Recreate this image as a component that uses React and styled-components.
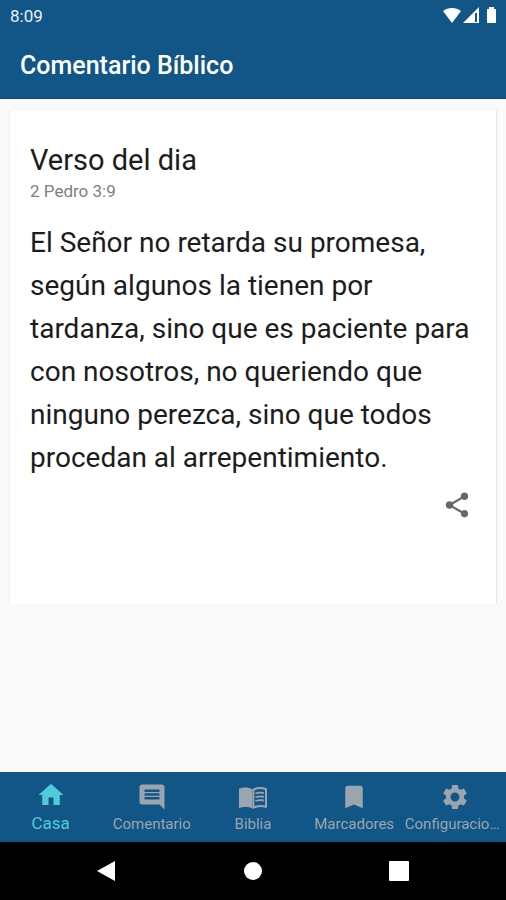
import React from 'react'
import styled, {createGlobalStyle} from 'styled-components'
import {MdBookmark, MdComment, MdHome, MdSettings, MdShare} from 'react-icons/md'

const blue = '#115687'
const darkBlue = '#0a4374'
const teal = '#4fcbd8'
const grey = '#9aa5ae'
const paper = '#fafafa'

const GlobalStyle = createGlobalStyle`
  body {
    margin: 0;
    background: ${paper};
    font-family: Roboto, 'Liberation Sans', sans-serif;
  }

  button {
    font-family: inherit;
    border: 0;
    padding: 0;
    background: none;
    cursor: pointer;
  }
`

const Screen = styled.div`
  min-height: 100vh;
  display: flex;
  flex-direction: column;
`

const Header = styled.header`
  background: ${blue};
  color: white;
  border-bottom: 1px solid ${darkBlue};
`

const StatusBar = styled.div`
  height: 32px;
  padding: 0 8px 0 10px;
  display: flex;
  align-items: center;
  justify-content: space-between;
  font-size: 17px;
  color: #e8f0f8;
`

const StatusIcons = styled.svg`
  width: 56px;
  height: 18px;
  display: block;
`

const AppTitle = styled.h1`
  margin: 0;
  padding: 2px 20px 0;
  font-size: 25px;
  font-weight: 500;
  line-height: 64px;
`

const Main = styled.main`
  flex: 1;
  padding: 11px 10px;
`

const Card = styled.article`
  box-sizing: border-box;
  min-height: 494px;
  padding: 32px 20px 80px;
  display: flex;
  flex-direction: column;
  background: white;
  box-shadow: 1px 0 1px #e8e8e8, -1px 0 1px #f0f0f0;
`

const CardTitle = styled.h2`
  margin: 0;
  font-size: 29px;
  font-weight: 400;
  line-height: 36px;
  color: #1c1c1c;
`

const Reference = styled.p`
  margin: 0;
  font-size: 17px;
  line-height: 26px;
  color: #808080;
`

const Verse = styled.p`
  margin: 17px 0 0;
  font-size: 28px;
  line-height: 43px;
  color: #1c1c1c;
`

const ShareButton = styled.button`
  align-self: flex-end;
  margin: 11px 4px 0 0;
  display: flex;
  font-size: 30px;
  color: #666;
`

const Tabs = styled.nav`
  height: 70px;
  display: grid;
  grid-template-columns: repeat(5, minmax(0, 1fr));
  background: ${blue};
`

const Tab = styled.button`
  padding-top: ${p => (p.$active ? 8 : 10)}px;
  display: flex;
  flex-direction: column;
  align-items: center;
  color: ${p => (p.$active ? teal : grey)};

  svg {
    width: 30px;
    height: 30px;
    flex: none;
  }
`

const TabLabel = styled.span`
  max-width: 100%;
  overflow: hidden;
  text-overflow: ellipsis;
  white-space: nowrap;
  font-size: ${p => (p.$active ? 17 : 15)}px;
  line-height: ${p => (p.$active ? 26 : 24)}px;
`

const SystemBar = styled.div`
  height: 58px;
  padding: 0 34px;
  display: grid;
  grid-template-columns: repeat(3, 1fr);
  background: black;
`

const SystemButton = styled.button`
  display: flex;
  align-items: center;
  justify-content: center;
`

// Open book: solid left page, outlined right page with text lines
const BookIcon = () => (
  <svg viewBox="0 0 24 24" fill="currentColor" aria-hidden="true">
    <path d="M.8 5.400C4 4 8.500 4 11.500 5.800v15.400C8.500 19.700 4 19.700.8 21z" />
    <path
      d="M12.300 6.300C15 4.400 19.500 4.500 22.400 5.800v14c-3-.9-7-.8-10.100.7z"
      fill="none"
      stroke="currentColor"
      strokeWidth="1.600"
    />
    <path
      d="M14 9.200c2-.8 4.500-.9 6.700-.4M14 12.200c2-.8 4.500-.9 6.700-.4M14 15.200c2-.8 4.500-.9 6.700-.4"
      fill="none"
      stroke="currentColor"
      strokeWidth="1.500"
    />
  </svg>
)

const tabs = [
  {label: 'Casa', Icon: MdHome, active: true},
  {label: 'Comentario', Icon: MdComment},
  {label: 'Biblia', Icon: BookIcon},
  {label: 'Marcadores', Icon: MdBookmark},
  {label: 'Configuraciones', Icon: MdSettings},
]

const systemButtons = [
  {label: 'Atrás', shape: <path d="M0 10 18 0v20z" />},
  {label: 'Inicio', shape: <circle cx="10" cy="10" r="9" />},
  {label: 'Recientes', shape: <rect width="20" height="20" rx="1" />},
]

export default function App() {
  return (
    <Screen>
      <GlobalStyle />
      <Header>
        <StatusBar>
          <span>8:09</span>
          <StatusIcons viewBox="0 0 56 18" fill="white" aria-hidden="true">
            <path d="M1 4c5-4 13-4 18 0l-9 12z" />
            <path d="M21 16 37 0v16z" />
            <path d="M33 6h2v9h-2z" fill={blue} />
            <path d="M45 2h2V0h5v2h2v14h-9z" />
          </StatusIcons>
        </StatusBar>
        <AppTitle>Comentario Bíblico</AppTitle>
      </Header>
      <Main>
        <Card>
          <CardTitle>Verso del dia</CardTitle>
          <Reference>2 Pedro 3:9</Reference>
          <Verse>
            El Señor no retarda su promesa, según algunos la tienen por
            tardanza, sino que es paciente para con nosotros, no queriendo que
            ninguno perezca, sino que todos procedan al arrepentimiento.
          </Verse>
          <ShareButton aria-label="Compartir">
            <MdShare />
          </ShareButton>
        </Card>
      </Main>
      <Tabs>
        {tabs.map(({label, Icon, active}) => (
          <Tab key={label} $active={active}>
            <Icon />
            <TabLabel $active={active}>{label}</TabLabel>
          </Tab>
        ))}
      </Tabs>
      <SystemBar>
        {systemButtons.map(({label, shape}) => (
          <SystemButton key={label} aria-label={label}>
            <svg width="20" height="20" viewBox="0 0 20 20" fill="white">
              {shape}
            </svg>
          </SystemButton>
        ))}
      </SystemBar>
    </Screen>
  )
}
